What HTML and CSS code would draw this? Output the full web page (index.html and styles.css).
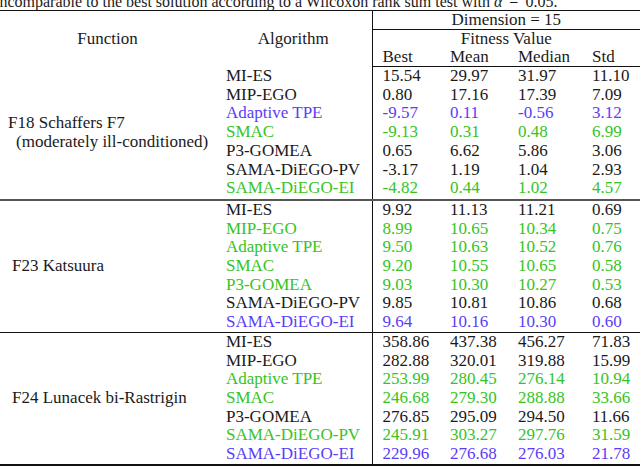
FILE: index.html
```html
<!DOCTYPE html>
<html>
<head>
<meta charset="utf-8">
<link rel="stylesheet" href="styles.css">
</head>
<body>
<div class="caption">incomparable to the best solution according to a Wilcoxon rank sum test with <i>α</i> <span class="rel">=</span> 0.05.</div>
<table class="results">
  <colgroup>
    <col class="c-fn"><col class="c-alg"><col class="c-best"><col class="c-mean"><col class="c-med"><col class="c-std">
  </colgroup>
  <thead>
    <tr class="h1"><th rowspan="3" class="fn-head">Function</th><th rowspan="3" class="alg-head">Algorithm</th><th colspan="4" class="dim">Dimension = 15</th></tr>
    <tr class="h2"><th colspan="4" class="fit">Fitness Value</th></tr>
    <tr class="h3"><th class="num first">Best</th><th class="num">Mean</th><th class="num">Median</th><th class="num">Std</th></tr>
  </thead>
  <tbody class="sec s1">
    <tr><td rowspan="7" class="fn"><span class="l1">F18 Schaffers F7</span><span class="l2">(moderately ill-conditioned)</span></td><td class="alg">MI-ES</td><td class="num first">15.54</td><td class="num">29.97</td><td class="num">31.97</td><td class="num">11.10</td></tr>
    <tr><td class="alg">MIP-EGO</td><td class="num first">0.80</td><td class="num">17.16</td><td class="num">17.39</td><td class="num">7.09</td></tr>
    <tr class="blue"><td class="alg">Adaptive TPE</td><td class="num first">-9.57</td><td class="num">0.11</td><td class="num">-0.56</td><td class="num">3.12</td></tr>
    <tr class="green"><td class="alg">SMAC</td><td class="num first">-9.13</td><td class="num">0.31</td><td class="num">0.48</td><td class="num">6.99</td></tr>
    <tr><td class="alg">P3-GOMEA</td><td class="num first">0.65</td><td class="num">6.62</td><td class="num">5.86</td><td class="num">3.06</td></tr>
    <tr><td class="alg">SAMA-DiEGO-PV</td><td class="num first">-3.17</td><td class="num">1.19</td><td class="num">1.04</td><td class="num">2.93</td></tr>
    <tr class="green last"><td class="alg">SAMA-DiEGO-EI</td><td class="num first">-4.82</td><td class="num">0.44</td><td class="num">1.02</td><td class="num">4.57</td></tr>
  </tbody>
  <tbody class="sec s2">
    <tr><td rowspan="7" class="fn">F23 Katsuura</td><td class="alg">MI-ES</td><td class="num first">9.92</td><td class="num">11.13</td><td class="num">11.21</td><td class="num">0.69</td></tr>
    <tr class="green"><td class="alg">MIP-EGO</td><td class="num first">8.99</td><td class="num">10.65</td><td class="num">10.34</td><td class="num">0.75</td></tr>
    <tr class="green"><td class="alg">Adaptive TPE</td><td class="num first">9.50</td><td class="num">10.63</td><td class="num">10.52</td><td class="num">0.76</td></tr>
    <tr class="green"><td class="alg">SMAC</td><td class="num first">9.20</td><td class="num">10.55</td><td class="num">10.65</td><td class="num">0.58</td></tr>
    <tr class="green"><td class="alg">P3-GOMEA</td><td class="num first">9.03</td><td class="num">10.30</td><td class="num">10.27</td><td class="num">0.53</td></tr>
    <tr><td class="alg">SAMA-DiEGO-PV</td><td class="num first">9.85</td><td class="num">10.81</td><td class="num">10.86</td><td class="num">0.68</td></tr>
    <tr class="blue"><td class="alg">SAMA-DiEGO-EI</td><td class="num first">9.64</td><td class="num">10.16</td><td class="num">10.30</td><td class="num">0.60</td></tr>
  </tbody>
  <tbody class="sec s3">
    <tr><td rowspan="7" class="fn">F24 Lunacek bi-Rastrigin</td><td class="alg">MI-ES</td><td class="num first">358.86</td><td class="num">437.38</td><td class="num">456.27</td><td class="num">71.83</td></tr>
    <tr><td class="alg">MIP-EGO</td><td class="num first">282.88</td><td class="num">320.01</td><td class="num">319.88</td><td class="num">15.99</td></tr>
    <tr class="green"><td class="alg">Adaptive TPE</td><td class="num first">253.99</td><td class="num">280.45</td><td class="num">276.14</td><td class="num">10.94</td></tr>
    <tr class="green"><td class="alg">SMAC</td><td class="num first">246.68</td><td class="num">279.30</td><td class="num">288.88</td><td class="num">33.66</td></tr>
    <tr><td class="alg">P3-GOMEA</td><td class="num first">276.85</td><td class="num">295.09</td><td class="num">294.50</td><td class="num">11.66</td></tr>
    <tr class="green"><td class="alg">SAMA-DiEGO-PV</td><td class="num first">245.91</td><td class="num">303.27</td><td class="num">297.76</td><td class="num">31.59</td></tr>
    <tr class="blue"><td class="alg">SAMA-DiEGO-EI</td><td class="num first">229.96</td><td class="num">276.68</td><td class="num">276.03</td><td class="num">21.78</td></tr>
  </tbody>
</table>
</body>
</html>
```

FILE: styles.css
```css
html, body {
  margin: 0;
  padding: 0;
  background: #fff;
}
body {
  width: 640px;
  height: 466px;
  overflow: hidden;
  font-family: "Liberation Serif", "Times New Roman", serif;
  font-size: 17px;
  color: #1a1a1a;
}
.caption {
  height: 10px;
  font-size: 16px;
  line-height: 3px;
  white-space: nowrap;
  margin-left: -5px;
}
.caption .rel {
  margin: 0 3px;
}
.results {
  border-collapse: collapse;
  table-layout: fixed;
  width: 640px;
  border-top: 1.5px solid #111;
  border-bottom: 2px solid #111;
}
.c-fn { width: 215px; }
.c-alg { width: 157px; }
.c-best { width: 68px; }
.c-mean { width: 68px; }
.c-med { width: 74px; }
.c-std { width: 58px; }
th, td {
  padding: 0;
  font-weight: normal;
  white-space: nowrap;
}
thead th {
  line-height: 18px;
  height: 18px;
}
.fn-head, .alg-head {
  text-align: center;
  vertical-align: middle;
}
.dim, .fit {
  text-align: center;
  border-left: 1px solid #111;
}
.dim {
  border-bottom: 1px solid #111;
}
.h3 th {
  border-bottom: 1px solid #111;
}
th.num, td.num {
  text-align: left;
  padding-left: 10px;
}
.first {
  border-left: 1px solid #111;
}
td {
  line-height: 18.7px;
  height: 18.7px;
}
.s1 .last td {
  padding-bottom: 1px;
}
td.fn {
  vertical-align: middle;
  padding-left: 12px;
}
td.fn .l1 {
  display: block;
  margin-left: -4px;
}
td.fn .l2 {
  display: block;
  margin-left: 4px;
}
td.alg {
  padding-left: 11px;
}
.s2 {
  border-top: 2px solid #555;
}
.s3 {
  border-top: 1.5px solid #111;
}
.blue td { color: #5a3df8; }
.green td { color: #36c41e; }
```
